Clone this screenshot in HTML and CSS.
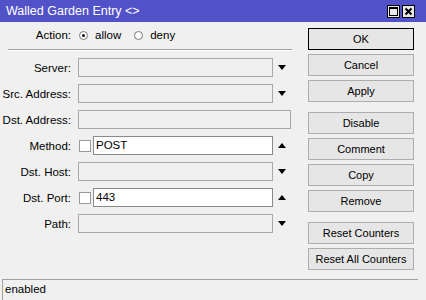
FILE: index.html
```html
<!DOCTYPE html>
<html lang="en">
<head>
  <meta charset="UTF-8">
  <meta name="viewport" content="width=device-width, initial-scale=1.0">
  <title>Walled Garden Entry</title>
  <link rel="stylesheet" href="styles.css">
</head>
<body>
  <div class="window">
    <div class="titlebar">
      <span class="title">Walled Garden Entry &lt;&gt;</span>
      <div class="title-buttons">
        <span class="tbtn">
          <svg width="9" height="9" viewBox="0 0 9 9"><rect x="0.5" y="0.5" width="8" height="8" fill="none" stroke="#000"/><line x1="0" y1="1.5" x2="9" y2="1.5" stroke="#000"/></svg>
        </span>
        <span class="tbtn">
          <svg width="9" height="9" viewBox="0 0 9 9"><path d="M1.5 1.5 L7.5 7.5 M7.5 1.5 L1.5 7.5" stroke="#000" stroke-width="2"/></svg>
        </span>
      </div>
    </div>

    <div class="main">
      <div class="form">
        <div class="action-row">
          <span class="label">Action:</span>
          <span class="radio checked"></span><span class="radio-text">allow</span>
          <span class="radio"></span><span class="radio-text">deny</span>
        </div>
        <div class="separator"></div>

        <div class="row">
          <span class="label">Server:</span>
          <span class="field"></span>
          <span class="arrow down"></span>
        </div>
        <div class="row">
          <span class="label">Src. Address:</span>
          <span class="field"></span>
          <span class="arrow down"></span>
        </div>
        <div class="row">
          <span class="label">Dst. Address:</span>
          <span class="field wide"></span>
        </div>
        <div class="row">
          <span class="label">Method:</span>
          <span class="check"></span>
          <span class="field short active">POST</span>
          <span class="arrow up"></span>
        </div>
        <div class="row">
          <span class="label">Dst. Host:</span>
          <span class="field"></span>
          <span class="arrow down"></span>
        </div>
        <div class="row">
          <span class="label">Dst. Port:</span>
          <span class="check"></span>
          <span class="field short active">443</span>
          <span class="arrow up"></span>
        </div>
        <div class="row">
          <span class="label">Path:</span>
          <span class="field"></span>
          <span class="arrow down"></span>
        </div>
      </div>

      <div class="buttons">
        <button class="default">OK</button>
        <button>Cancel</button>
        <button>Apply</button>
        <button class="group">Disable</button>
        <button>Comment</button>
        <button>Copy</button>
        <button>Remove</button>
        <button class="group">Reset Counters</button>
        <button>Reset All Counters</button>
      </div>
    </div>

    <div class="statusbar">enabled</div>
  </div>
</body>
</html>
```

FILE: styles.css
```css
body {
  margin: 0;
  padding: 0;
  font-family: "Liberation Sans", Arial, sans-serif;
  font-size: 11.5px;
  color: #000;
  background-color: #f0f0f0;
}
.window {
  width: 426px;
  height: 300px;
  display: flex;
  flex-direction: column;
  background-color: #f0f0f0;
}
.titlebar {
  height: 22px;
  flex-shrink: 0;
  background-color: #5252c8;
  color: #fff;
  display: flex;
  align-items: center;
  justify-content: space-between;
  padding: 0 11px 0 6px;
}
.title {
  font-size: 12.5px;
}
.title-buttons {
  display: flex;
  gap: 2px;
}
.tbtn {
  width: 11px;
  height: 11px;
  background-color: #e8e8e8;
  border: 1px solid #000;
  display: flex;
  align-items: center;
  justify-content: center;
}
.main {
  flex: 1;
  display: flex;
}
.form {
  width: 300px;
  padding-top: 4px;
}
.label {
  width: 71px;
  margin-right: 7px;
  text-align: right;
  flex-shrink: 0;
}
.action-row {
  height: 18px;
  display: flex;
  align-items: center;
}
.radio {
  width: 9px;
  height: 9px;
  border-radius: 50%;
  border: 1px solid #777;
  background-color: #fff;
  margin-left: 1px;
  box-sizing: border-box;
  position: relative;
}
.radio.checked::after {
  content: "";
  position: absolute;
  left: 2px;
  top: 2px;
  width: 3px;
  height: 3px;
  border-radius: 50%;
  background-color: #000;
}
.radio-text {
  margin-left: 7px;
  margin-right: 12px;
}
.separator {
  margin: 5px 0 0 8px;
  width: 284px;
  height: 0;
  border-top: 1px solid #a0a0a0;
  border-bottom: 1px solid #fff;
}
.row {
  height: 19px;
  margin-top: 7px;
  display: flex;
  align-items: center;
}
.field {
  width: 195px;
  height: 19px;
  box-sizing: border-box;
  border: 1px solid #a8a8a8;
  background-color: #f0f0f0;
  padding-left: 2px;
  line-height: 17px;
}
.field.wide {
  width: 213px;
}
.field.short {
  width: 180px;
  margin-left: 2px;
}
.field.active {
  background-color: #fff;
  border-color: #8a8a8a;
}
.check {
  width: 12px;
  height: 12px;
  box-sizing: border-box;
  border: 1px solid #999;
  background-color: #fff;
  margin-left: 1px;
}
.arrow {
  width: 18px;
  display: flex;
  justify-content: center;
}
.arrow::before {
  content: "";
  border-left: 4px solid transparent;
  border-right: 4px solid transparent;
}
.arrow.down::before {
  border-top: 5px solid #000;
}
.arrow.up::before {
  border-bottom: 5px solid #000;
}
.buttons {
  margin-left: 8px;
  padding-top: 6px;
  width: 106px;
  display: flex;
  flex-direction: column;
  gap: 4px;
}
button {
  height: 22px;
  font-family: "Liberation Sans", Arial, sans-serif;
  font-size: 11px;
  color: #000;
  background-color: #e6e6e6;
  border: 1px solid #adadad;
  padding: 0;
}
button.default {
  border-color: #000;
}
button.group {
  margin-top: 6px;
}
.statusbar {
  height: 21px;
  flex-shrink: 0;
  box-sizing: border-box;
  margin: 0 8px 0 2px;
  border-top: 1px solid #a0a0a0;
  border-left: 1px solid #a0a0a0;
  padding-left: 2px;
  line-height: 19px;
}
```
